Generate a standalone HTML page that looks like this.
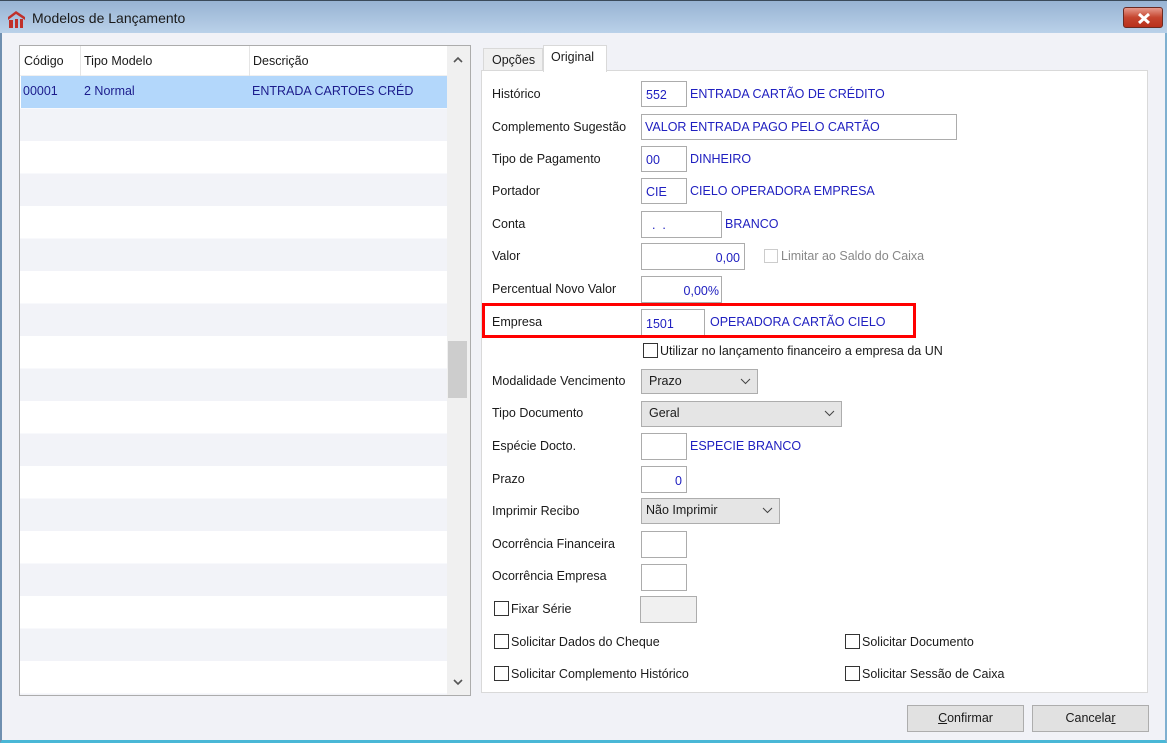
<!DOCTYPE html>
<html><head><meta charset="utf-8"><style>
*{box-sizing:border-box;margin:0;padding:0}
body{width:1167px;height:743px;overflow:hidden;background:#f1f2f7;font-family:"Liberation Sans",Arial,sans-serif;font-size:12.5px;color:#1a1a1a;position:relative}
.a{position:absolute}
.title{left:0;top:0;width:1167px;height:33px;background:linear-gradient(#97b3d3,#bad1e9);border-top:1px solid #3a4a5a}
.win{left:0;top:33px;width:1167px;height:710px;border-left:2px solid #6f8fb0;border-right:2px solid #7fb0d0;border-bottom:3px solid #49b7d6}
.lbl{position:absolute;left:492px;white-space:nowrap}
.box{position:absolute;background:#fff;border:1px solid #acacac;color:#2020c0;padding:0 4px;line-height:22px;white-space:nowrap}
.blue{position:absolute;color:#2020c0;white-space:nowrap}
.dd{position:absolute;background:#e5e5e5;border:1px solid #adadad;padding-left:7px;line-height:22px}
.dd svg{position:absolute;right:6px;top:8px}
.cb{position:absolute;width:15px;height:15px;border:1px solid #333;background:#fff}
.btn{position:absolute;background:#e1e1e1;border:1px solid #adadad;text-align:center;line-height:24px}
</style></head><body>
<div class="a title">
 <svg class="a" style="left:7px;top:9px" width="19" height="18" viewBox="0 0 19 18"><path d="M1 7 L9 1 L18 7 L18 10 L9 4 L1 10Z" fill="#c0302a"/><rect x="2" y="10" width="4" height="8" fill="#c0302a"/><rect x="8" y="9" width="3" height="9" fill="#c0302a"/><rect x="13" y="9" width="3" height="9" fill="#c0302a"/></svg>
 <div class="a" style="left:32px;top:9px;font-size:14px;color:#1a1a1a">Modelos de Lançamento</div>
 <div class="a" style="left:1123px;top:6px;width:40px;height:21px;border-radius:3px;border:1px solid #6b2a22;background:linear-gradient(#e79a8c,#c5452f 50%,#b9301c)"><svg class="a" style="left:13px;top:5px" width="14" height="11"><path d="M2 1 L12 10 M12 1 L2 10" stroke="#fff" stroke-width="3"/></svg></div>
</div>
<div class="a win"></div>
<!-- list -->
<div class="a" style="left:19px;top:45px;width:452px;height:651px;border:1px solid #acacac;background:#fff;overflow:hidden">
 <div class="a" style="left:0;top:30px;width:427px;height:620px;background:repeating-linear-gradient(#fff 0 32.5px,#f2f3f8 32.5px 65px)"></div>
 <div class="a" style="left:0;top:0;width:427px;height:30px;background:#fff;border-bottom:1px solid #f0f0f0"></div>
 <div class="a" style="left:60px;top:0;height:30px;border-left:1px solid #e5e5e5"></div>
 <div class="a" style="left:229px;top:0;height:30px;border-left:1px solid #e5e5e5"></div>
 <div class="a" style="left:4px;top:8px">Código</div>
 <div class="a" style="left:64px;top:8px">Tipo Modelo</div>
 <div class="a" style="left:233px;top:8px">Descrição</div>
 <div class="a" style="left:1px;top:30px;width:426px;height:32px;background:#b3d7fb;color:#1c1c8c">
  <span class="a" style="left:2px;top:8px">00001</span><span class="a" style="left:63px;top:8px">2 Normal</span><span class="a" style="left:231px;top:8px">ENTRADA CARTOES CRÉD</span></div>
 <div class="a" style="left:427px;top:0;width:23px;height:650px;background:#f0f0f0"></div>
 <div class="a" style="left:428px;top:295px;width:19px;height:57px;background:#cdcdcd"></div>
 <svg class="a" style="left:433px;top:10px" width="10" height="7"><path d="M1 6 L5 2 L9 6" stroke="#555" stroke-width="1.6" fill="none"/></svg>
 <svg class="a" style="left:433px;top:633px" width="10" height="7"><path d="M1 1 L5 5 L9 1" stroke="#555" stroke-width="1.6" fill="none"/></svg>
</div>
<!-- tabs -->
<div class="a" style="left:481px;top:70px;width:667px;height:623px;background:#fff;border:1px solid #d9d9d9"></div>
<div class="a" style="left:483px;top:48px;width:60px;height:22px;background:#f0f0f0;border:1px solid #d9d9d9;border-bottom:none;padding:4px 0 0 8px">Opções</div>
<div class="a" style="left:543px;top:45px;width:64px;height:27px;background:#fff;border:1px solid #d9d9d9;border-bottom:none;padding:4px 0 0 7px">Original</div>

<div class="lbl" style="top:87px">Histórico</div>
<div class="box" style="left:641px;top:81px;width:46px;height:26px;line-height:26px">552</div>
<div class="blue" style="left:690px;top:87px">ENTRADA CARTÃO DE CRÉDITO</div>

<div class="lbl" style="top:120px">Complemento Sugestão</div>
<div class="box" style="left:641px;top:114px;width:316px;height:26px;line-height:24px;padding-left:3px">VALOR ENTRADA PAGO PELO CARTÃO</div>

<div class="lbl" style="top:152px">Tipo de Pagamento</div>
<div class="box" style="left:641px;top:146px;width:46px;height:26px;line-height:27px">00</div>
<div class="blue" style="left:690px;top:152px">DINHEIRO</div>

<div class="lbl" style="top:184px">Portador</div>
<div class="box" style="left:641px;top:178px;width:46px;height:26px;line-height:27px">CIE</div>
<div class="blue" style="left:690px;top:184px">CIELO OPERADORA EMPRESA</div>

<div class="lbl" style="top:217px">Conta</div>
<div class="box" style="left:641px;top:211px;width:81px;height:27px;line-height:27px;padding-left:10px">.&nbsp;&nbsp;.</div>
<div class="blue" style="left:725px;top:217px">BRANCO</div>

<div class="lbl" style="top:249px">Valor</div>
<div class="box" style="left:641px;top:243px;width:104px;height:27px;line-height:28px;text-align:right">0,00</div>
<div class="a" style="left:764px;top:249px;width:14px;height:14px;border:1px solid #ccc"></div>
<div class="a" style="left:781px;top:249px;color:#888">Limitar ao Saldo do Caixa</div>

<div class="lbl" style="top:282px">Percentual Novo Valor</div>
<div class="box" style="left:641px;top:276px;width:81px;height:27px;line-height:28px;text-align:right;padding-right:2px">0,00%</div>

<div class="a" style="left:482px;top:303px;width:434px;height:35px;border:3px solid #f00"></div>
<div class="lbl" style="top:315px">Empresa</div>
<div class="box" style="left:641px;top:309px;width:64px;height:26px;line-height:28px;border-bottom:none">1501</div>
<div class="blue" style="left:710px;top:315px">OPERADORA CARTÃO CIELO</div>

<div class="cb" style="left:643px;top:343px"></div>
<div class="a" style="left:660px;top:344px">Utilizar no lançamento financeiro a empresa da UN</div>

<div class="lbl" style="top:374px">Modalidade Vencimento</div>
<div class="dd" style="left:641px;top:369px;width:117px;height:25px">Prazo<svg width="11" height="7"><path d="M1 1 L5.5 5.5 L10 1" stroke="#444" fill="none"/></svg></div>

<div class="lbl" style="top:406px">Tipo Documento</div>
<div class="dd" style="left:641px;top:401px;width:201px;height:26px">Geral<svg width="11" height="7"><path d="M1 1 L5.5 5.5 L10 1" stroke="#444" fill="none"/></svg></div>

<div class="lbl" style="top:439px">Espécie Docto.</div>
<div class="box" style="left:641px;top:433px;width:46px;height:27px"></div>
<div class="blue" style="left:690px;top:439px">ESPECIE BRANCO</div>

<div class="lbl" style="top:472px">Prazo</div>
<div class="box" style="left:641px;top:466px;width:46px;height:27px;line-height:28px;text-align:right">0</div>

<div class="lbl" style="top:504px">Imprimir Recibo</div>
<div class="dd" style="left:641px;top:498px;width:139px;height:26px;padding-left:4px">Não Imprimir<svg width="11" height="7"><path d="M1 1 L5.5 5.5 L10 1" stroke="#444" fill="none"/></svg></div>

<div class="lbl" style="top:537px">Ocorrência Financeira</div>
<div class="box" style="left:641px;top:531px;width:46px;height:27px"></div>
<div class="lbl" style="top:569px">Ocorrência Empresa</div>
<div class="box" style="left:641px;top:564px;width:46px;height:27px"></div>

<div class="cb" style="left:494px;top:601px"></div>
<div class="a" style="left:511px;top:602px">Fixar Série</div>
<div class="a" style="left:640px;top:596px;width:57px;height:27px;background:#f0f0f0;border:1px solid #adadad"></div>

<div class="cb" style="left:494px;top:634px"></div>
<div class="a" style="left:511px;top:635px">Solicitar Dados do Cheque</div>
<div class="cb" style="left:494px;top:666px"></div>
<div class="a" style="left:511px;top:667px">Solicitar Complemento Histórico</div>
<div class="cb" style="left:845px;top:634px"></div>
<div class="a" style="left:862px;top:635px">Solicitar Documento</div>
<div class="cb" style="left:845px;top:666px"></div>
<div class="a" style="left:862px;top:667px">Solicitar Sessão de Caixa</div>

<div class="btn" style="left:907px;top:705px;width:117px;height:27px"><u>C</u>onfirmar</div>
<div class="btn" style="left:1032px;top:705px;width:117px;height:27px">Cancela<u>r</u></div>
</body></html>
